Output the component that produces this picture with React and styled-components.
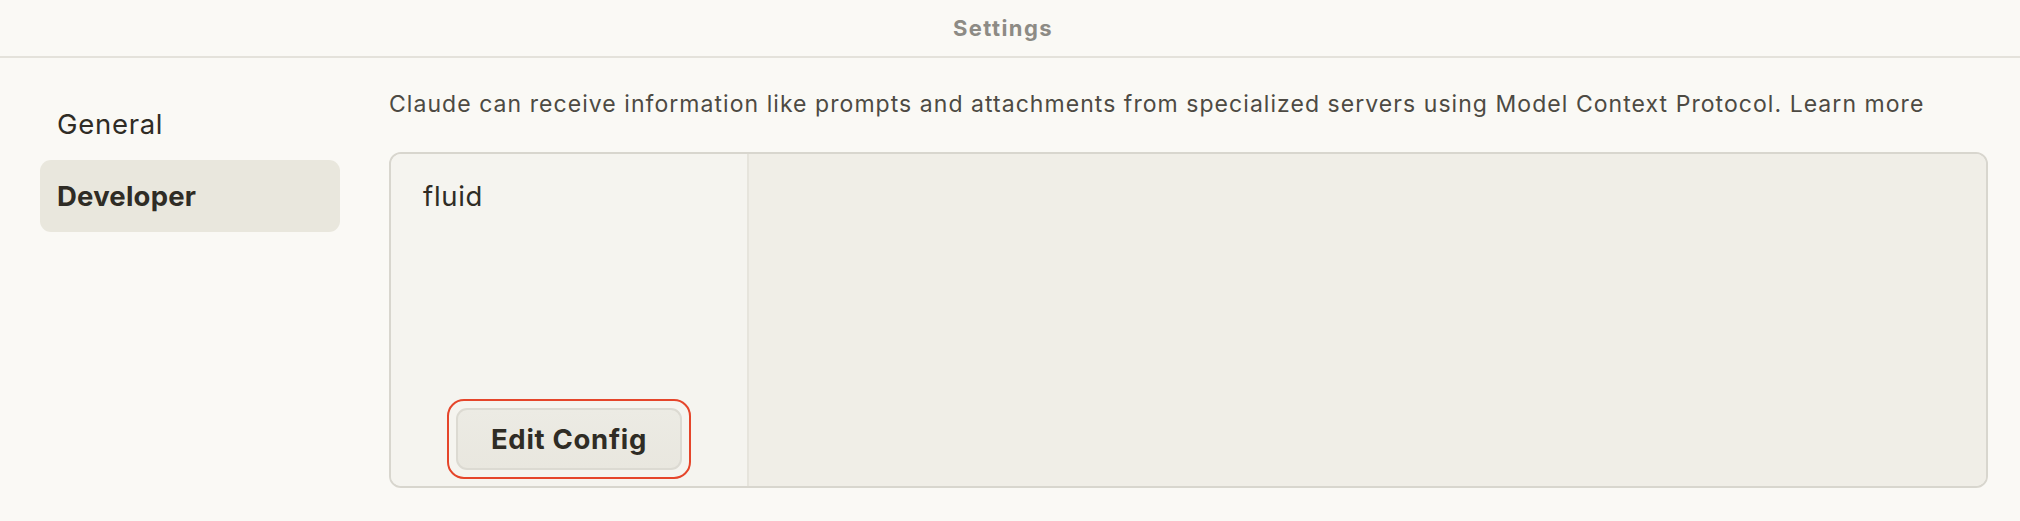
import React from "react";
import styled, { createGlobalStyle } from "styled-components";

const Global = createGlobalStyle`
  html, body { margin: 0; padding: 0; background: #faf9f5; }
  body { font-family: "Inter", "Noto Sans", sans-serif; color: #2f2c25; }
  * { box-sizing: border-box; }
`;

const Page = styled.div`
  width: 2020px;
  height: 521px;
  background: #faf9f5;
  display: flex;
  flex-direction: column;
`;

const Header = styled.header`
  height: 58px;
  border-bottom: 2px solid #e4e2db;
  display: flex;
  align-items: center;
  justify-content: center;
  padding-right: 14px;
`;

const Title = styled.h1`
  margin: 0;
  font-size: 22px;
  font-weight: 700;
  color: #8d8b85;
  letter-spacing: 1.4px;
`;

const Body = styled.div`
  display: flex;
  gap: 49px;
  padding: 30px 32px 0 40px;
  flex: 1;
`;

const Sidebar = styled.nav`
  width: 300px;
  display: flex;
  flex-direction: column;
`;

const NavItem = styled.div`
  height: 72px;
  display: flex;
  align-items: center;
  padding-left: 17px;
  border-radius: 11px;
  font-size: 27.5px;
  letter-spacing: ${(p) => (p.$active ? "0.2px" : "0.7px")};
  font-weight: ${(p) => (p.$active ? 700 : 400)};
  background: ${(p) => (p.$active ? "#e9e7dd" : "transparent")};
  color: #2f2c25;
`;

const Main = styled.main`
  flex: 1;
  display: flex;
  flex-direction: column;
`;

const Description = styled.p`
  margin: 0;
  height: 64px;
  font-size: 23px;
  line-height: 32px;
  letter-spacing: 1.05px;
  color: #4d4a43;
`;

const Card = styled.div`
  height: 336px;
  border: 2px solid #d8d6ce;
  border-radius: 12px;
  display: flex;
  overflow: hidden;
`;

const ServerList = styled.div`
  width: 358px;
  background: #f5f4ef;
  border-right: 2px solid #e6e4dc;
  display: flex;
  flex-direction: column;
  align-items: center;
  padding: 25px 0 7px;
`;

const ServerName = styled.div`
  align-self: flex-start;
  padding-left: 32px;
  font-size: 27.5px;
  letter-spacing: 0.7px;
  color: #2f2c25;
`;

const Spacer = styled.div`
  flex: 1;
`;

const Ring = styled.div`
  padding: 7px;
  border: 2px solid #e5452a;
  border-radius: 17px;
`;

const Button = styled.button`
  display: block;
  width: 226px;
  height: 62px;
  border: 2px solid #dcdad2;
  border-radius: 11px;
  background: linear-gradient(#ecebe4, #e9e7df);
  font-family: inherit;
  font-size: 27.5px;
  font-weight: 700;
  letter-spacing: 0.7px;
  color: #2f2c25;
  padding: 0;
`;

const Detail = styled.div`
  flex: 1;
  background: #f0eee7;
`;

const desc =
  "Claude can receive information like prompts and attachments from specialized servers using Model Context Protocol. Learn more";

export default function App() {
  return (
    <Page>
      <Global />
      <Header>
        <Title>Settings</Title>
      </Header>
      <Body>
        <Sidebar>
          <NavItem>General</NavItem>
          <NavItem $active>Developer</NavItem>
        </Sidebar>
        <Main>
          <Description>{desc}</Description>
          <Card>
            <ServerList>
              <ServerName>fluid</ServerName>
              <Spacer />
              <Ring>
                <Button>Edit Config</Button>
              </Ring>
            </ServerList>
            <Detail />
          </Card>
        </Main>
      </Body>
    </Page>
  );
}
